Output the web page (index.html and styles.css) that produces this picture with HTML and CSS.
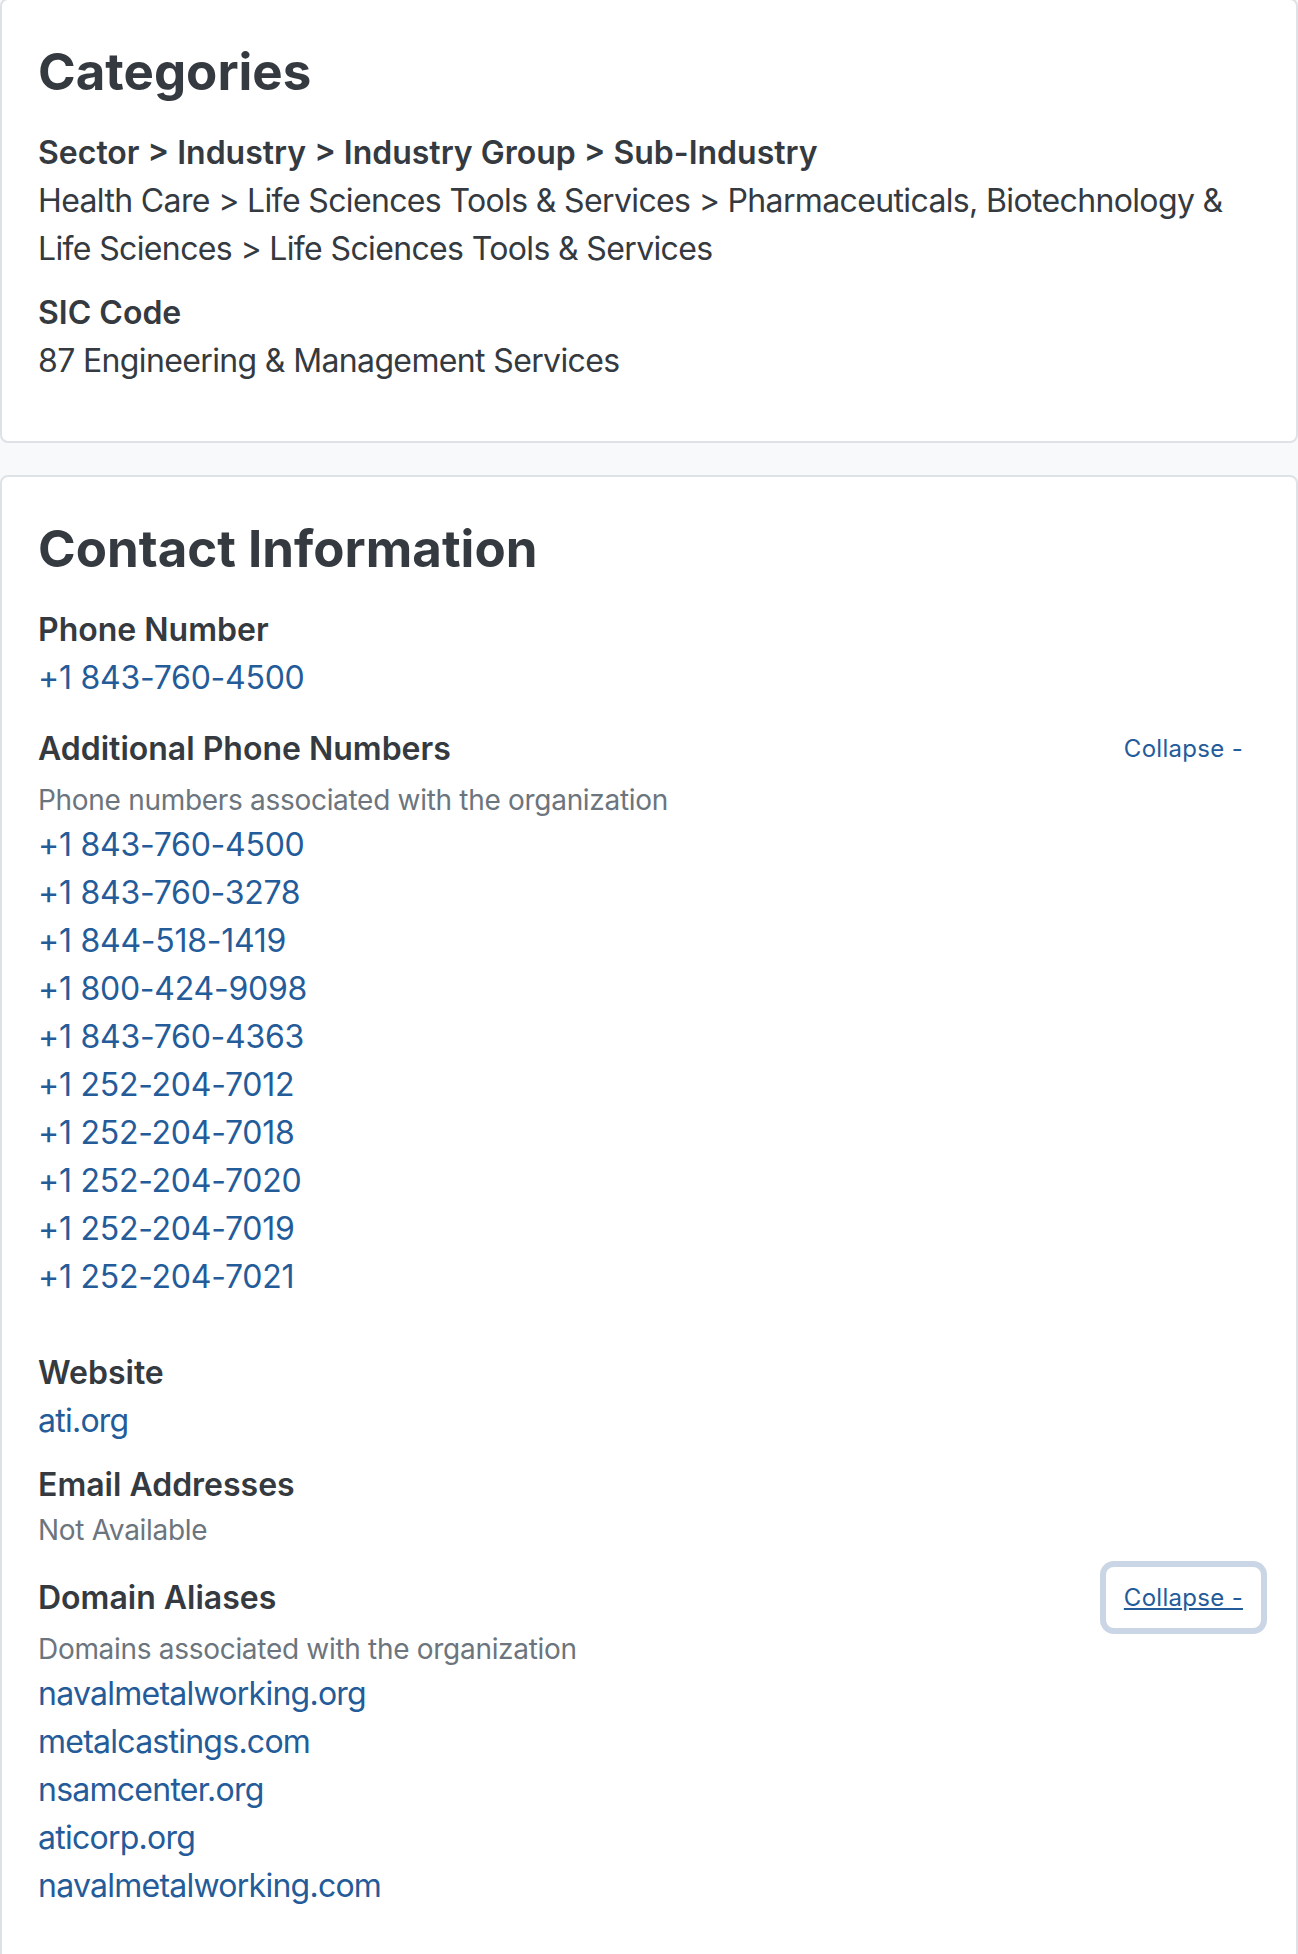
FILE: index.html
```html
<!DOCTYPE html>
<html lang="en">
<head>
    <meta charset="UTF-8" />
    <title>Company profile</title>
    <link rel="stylesheet" href="styles.css">
</head>
<body>
    <div class="page">
        <section class="card">
            <h2 class="card-title">Categories</h2>
            <div class="field">
                <div class="field-label">Sector &gt; Industry &gt; Industry Group &gt; Sub-Industry</div>
                <div class="field-value">Health Care &gt; Life Sciences Tools &amp; Services &gt; Pharmaceuticals, Biotechnology &amp; Life Sciences &gt; Life Sciences Tools &amp; Services</div>
            </div>
            <div class="field">
                <div class="field-label">SIC Code</div>
                <div class="field-value">87 Engineering &amp; Management Services</div>
            </div>
        </section>

        <section class="card">
            <h2 class="card-title">Contact Information</h2>
            <div class="field">
                <div class="field-label">Phone Number</div>
                <a class="link" href="javascript:;">+1 843-760-4500</a>
            </div>

            <div class="field field-list">
                <div class="field-head">
                    <div class="field-label">Additional Phone Numbers</div>
                    <a class="toggle" href="javascript:;">Collapse -</a>
                </div>
                <div class="field-note">Phone numbers associated with the organization</div>
                <ul class="values">
                    <li><a class="link" href="javascript:;">+1 843-760-4500</a></li>
                    <li><a class="link" href="javascript:;">+1 843-760-3278</a></li>
                    <li><a class="link" href="javascript:;">+1 844-518-1419</a></li>
                    <li><a class="link" href="javascript:;">+1 800-424-9098</a></li>
                    <li><a class="link" href="javascript:;">+1 843-760-4363</a></li>
                    <li><a class="link" href="javascript:;">+1 252-204-7012</a></li>
                    <li><a class="link" href="javascript:;">+1 252-204-7018</a></li>
                    <li><a class="link" href="javascript:;">+1 252-204-7020</a></li>
                    <li><a class="link" href="javascript:;">+1 252-204-7019</a></li>
                    <li><a class="link" href="javascript:;">+1 252-204-7021</a></li>
                </ul>
            </div>

            <div class="field">
                <div class="field-label">Website</div>
                <a class="link domain" href="javascript:;">ati.org</a>
            </div>
            <div class="field">
                <div class="field-label">Email Addresses</div>
                <div class="field-note">Not Available</div>
            </div>

            <div class="field">
                <div class="field-head">
                    <div class="field-label">Domain Aliases</div>
                    <a class="toggle focused" href="javascript:;">Collapse -</a>
                </div>
                <div class="field-note">Domains associated with the organization</div>
                <ul class="values">
                    <li><a class="link domain" href="javascript:;">navalmetalworking.org</a></li>
                    <li><a class="link domain" href="javascript:;">metalcastings.com</a></li>
                    <li><a class="link domain" href="javascript:;">nsamcenter.org</a></li>
                    <li><a class="link domain" href="javascript:;">aticorp.org</a></li>
                    <li><a class="link domain" href="javascript:;">navalmetalworking.com</a></li>
                </ul>
            </div>
        </section>
    </div>
</body>
</html>
```

FILE: styles.css
```css
body{
    margin: 0;
    background: #f8f9fa;
    font-family: Inter, "Noto Sans", sans-serif;
    font-size: 32px;
    line-height: 48px;
    color: #343a40;
}
.page{
    margin-top: -2px;
}
.card{
    background: #fff;
    border: 2px solid #dee2e6;
    border-radius: 8px;
    padding: 42px 35px 40px 36px;
    margin-bottom: 32px;
}
.card-title{
    margin: 0 0 27px;
    font-size: 51px;
    line-height: 60px;
    font-weight: 700;
}
.field{
    margin-bottom: 16px;
}
.field-list{
    margin-bottom: 48px;
}
.field-label{
    font-weight: 600;
}
.field-value{
    font-weight: 400;
    letter-spacing: -0.02em;
}
.field-head{
    display: flex;
    justify-content: space-between;
    align-items: center;
}
.field-note{
    font-size: 28px;
    line-height: 42px;
    letter-spacing: -0.3px;
    color: #6c757d;
}
a{
    text-decoration: none;
}
.link{
    color: #245b99;
    letter-spacing: -0.25px;
}
.link.domain{
    letter-spacing: -0.75px;
}
.values{
    margin: 0;
    padding: 0;
}
.values li{
    list-style: none;
}
.toggle{
    display: block;
    font-size: 24px;
    line-height: 37px;
    letter-spacing: 0.3px;
    padding: 12px 18px;
    color: #245b99;
    border-radius: 8px;
}
.toggle.focused{
    text-decoration: underline;
    box-shadow: 0 0 0 6px #cad6e5;
}
```
